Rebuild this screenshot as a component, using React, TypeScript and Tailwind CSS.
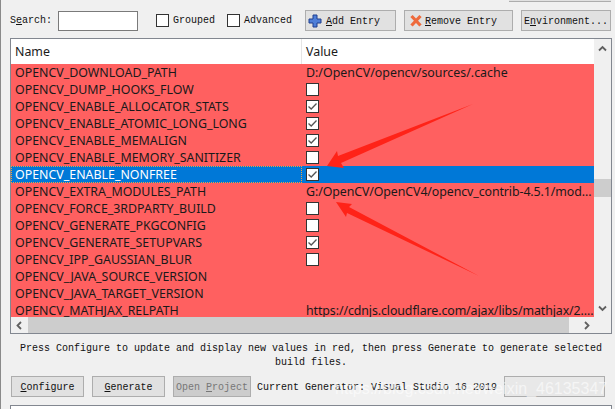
import React from 'react';

const rows = [
  { name: 'OPENCV_DOWNLOAD_PATH', value: 'D:/OpenCV/opencv/sources/.cache' },
  { name: 'OPENCV_DUMP_HOOKS_FLOW', check: false },
  { name: 'OPENCV_ENABLE_ALLOCATOR_STATS', check: true },
  { name: 'OPENCV_ENABLE_ATOMIC_LONG_LONG', check: true },
  { name: 'OPENCV_ENABLE_MEMALIGN', check: true },
  { name: 'OPENCV_ENABLE_MEMORY_SANITIZER', check: false },
  { name: 'OPENCV_ENABLE_NONFREE', check: true, selected: true },
  { name: 'OPENCV_EXTRA_MODULES_PATH', value: 'G:/OpenCV/OpenCV4/opencv_contrib-4.5.1/mod...' },
  { name: 'OPENCV_FORCE_3RDPARTY_BUILD', check: false },
  { name: 'OPENCV_GENERATE_PKGCONFIG', check: false },
  { name: 'OPENCV_GENERATE_SETUPVARS', check: true },
  { name: 'OPENCV_IPP_GAUSSIAN_BLUR', check: false },
  { name: 'OPENCV_JAVA_SOURCE_VERSION' },
  { name: 'OPENCV_JAVA_TARGET_VERSION' },
  { name: 'OPENCV_MATHJAX_RELPATH', value: 'https://cdnjs.cloudflare.com/ajax/libs/mathjax/2....' },
];

const Check = ({ checked }: { checked: boolean }) => (
  <div className="w-[13px] h-[13px] bg-white border border-[#333333] flex items-center justify-center">
    {checked && (
      <svg width="11" height="11" viewBox="0 0 11 11" fill="none" stroke="#555555" strokeWidth="1.3">
        <path d="M1.5 5.5 L4.2 8 L9.5 2.5" />
      </svg>
    )}
  </div>
);

const Btn = ({ className, children }: { className: string; children: React.ReactNode }) => (
  <div className={`h-[21px] pt-[1px] flex items-center justify-center bg-[#e1e1e1] border border-[#adadad] ${className}`}>
    {children}
  </div>
);

const Chevron = ({ d }: { d: string }) => (
  <svg width="9" height="9" viewBox="0 0 9 9" fill="none" stroke="#606060" strokeWidth="1.8">
    <path d={d} />
  </svg>
);

export default function App() {
  return (
    <div className="relative w-[615px] h-[409px] overflow-hidden bg-[#f0f0f0] border-l border-[#8a8a8a] text-[10px] text-[#111111] font-['Liberation_Mono',monospace]">
      {/* top stub of the button above */}
      <div className="h-[2px] flex justify-end pr-[4px]">
        <div className="w-[102px] border-b border-[#adadad] bg-[#e1e1e1]" />
      </div>

      {/* toolbar */}
      <div className="h-[21px] mt-[8px] flex items-center">
        <span className="ml-[9px] w-[48px]">S<u>e</u>arch:</span>
        <div className="w-[80px] h-[20px] bg-white border border-[#7a7a7a]" />
        <div className="ml-[18px] w-[13px] h-[13px] bg-white border border-[#333333]" />
        <span className="ml-[4px] w-[54px]">Grouped</span>
        <div className="w-[13px] h-[13px] bg-white border border-[#333333]" />
        <span className="ml-[4px] w-[54px]">Advanced</span>
        <Btn className="ml-[7px] w-[91px] !justify-start pl-[2px]">
          <svg width="14" height="14" viewBox="0 0 14 14" className="mr-[4px]">
            <path d="M5 1h4v4h4v4H9v4H5V9H1V5h4z" fill="#4f7fd8" stroke="#1f3f8f" strokeWidth="1" />
          </svg>
          <span><u>A</u>dd Entry</span>
        </Btn>
        <Btn className="ml-[8px] w-[109px] !justify-start pl-[4px]">
          <svg width="14" height="14" viewBox="0 0 14 14" className="mr-[2px]">
            <path d="M2.5 2 L11.5 11.5 M11.5 2 L2.5 11.5" stroke="#ee6a3c" strokeWidth="3.2" />
          </svg>
          <span><u>R</u>emove Entry</span>
        </Btn>
        <Btn className="ml-[8px] w-[90px]">
          <span>E<u>n</u>vironment...</span>
        </Btn>
      </div>

      {/* cache table */}
      <div className="mt-[7px] ml-[9px] w-[602px] h-[296px] bg-white border border-[#828790] flex flex-col font-['Noto_Sans',sans-serif] text-[12.4px] text-[#1a1a1a]">
        <div className="flex-1 flex min-h-0 overflow-hidden">
          <div className="w-[583px] flex flex-col">
            <div className="h-[25px] shrink-0 flex items-center bg-white">
              <div className="w-[291px] shrink-0 h-full flex items-center pl-[4px] pt-[1px] border-r border-[#e5e5e5]">Name</div>
              <div className="pl-[4px] pt-[1px]">Value</div>
            </div>
            {rows.map((r) => (
              <div
                key={r.name}
                className={`h-[17px] shrink-0 flex items-center leading-none ${r.selected ? 'bg-[#0078d7] text-white' : 'bg-[#ff6060]'}`}
              >
                <div className={`w-[291px] shrink-0 h-full pt-[1px] flex items-center ${r.selected ? 'pl-[3px] border border-dotted border-[#f0a040]' : 'pl-[4px]'}`}>
                  {r.name}
                </div>
                <div className={`flex-1 min-w-0 overflow-hidden pl-[4px] h-full flex items-center whitespace-nowrap ${r.value ? 'pt-[1px]' : ''} ${r.value && r.value.length > 40 ? 'tracking-[-0.1px]' : ''}`}>
                  {r.value}
                  {r.check !== undefined && <Check checked={r.check} />}
                </div>
              </div>
            ))}
          </div>
          {/* vertical scrollbar */}
          <div className="flex-1 flex flex-col items-center bg-[#f0f0f0]">
            <div className="h-[17px] mt-[1px] flex items-center">
              <Chevron d="M1 6.5 L4.5 3 L8 6.5" />
            </div>
            <div className="w-full h-[18px] mt-[122px] bg-[#cdcdcd]" />
            <div className="h-[17px] mt-auto flex items-center">
              <Chevron d="M1 2.5 L4.5 6 L8 2.5" />
            </div>
          </div>
        </div>
        {/* horizontal scrollbar */}
        <div className="h-[16px] shrink-0 flex items-center bg-[#f0f0f0]">
          <div className="w-[17px] flex justify-center">
            <Chevron d="M6 1 L2.5 4.5 L6 8" />
          </div>
          <div className="w-[541px] h-full bg-[#cdcdcd]" />
          <div className="w-[34px] flex justify-center">
            <Chevron d="M3 1 L6.5 4.5 L3 8" />
          </div>
        </div>
      </div>

      {/* hint text */}
      <div className="mt-[8px] w-full pl-[6px] text-center leading-[14px]">
        <div>Press Configure to update and display new values in red, then press Generate to generate selected</div>
        <div>build files.</div>
      </div>

      {/* bottom buttons */}
      <div className="mt-[6px] h-[21px] flex items-center">
        <Btn className="ml-[10px] w-[73px]"><span><u>C</u>onfigure</span></Btn>
        <Btn className="ml-[8px] w-[73px]"><span><u>G</u>enerate</span></Btn>
        <Btn className="ml-[8px] w-[78px] !bg-[#cccccc] text-[#777777]"><span>Open <u>P</u>roject</span></Btn>
        <span className="ml-[6px] w-[247px] pt-[1px]">Current Generator: Visual Studio 16 2019</span>
        <Btn className="w-[101px] !bg-[#e8e8e8]"><span /></Btn>
      </div>

      {/* output box */}
      <div className="mt-[8px] ml-[9px] w-[602px] h-[10px] bg-white border border-[#828790]" />

      {/* red arrows drawn on top of the screenshot */}
      <svg className="absolute left-[-1px] top-0 pointer-events-none" width="615" height="409" viewBox="0 0 615 409">
        <path d="M473 104 L338 156 L337 151 L327 166 L344 168 L341 163 Z" fill="#ff2318" />
        <path d="M479 276 L349 207 L352 204 L336 202 L346 217 L347 213 Z" fill="#ff2318" />
      </svg>

      {/* watermark */}
      <div className="absolute left-[334px] top-[381px] text-[16px] leading-none text-white/60 font-['Liberation_Sans',sans-serif] whitespace-nowrap">
        https://blog.csdn.net/weixin_46135347
      </div>
    </div>
  );
}
